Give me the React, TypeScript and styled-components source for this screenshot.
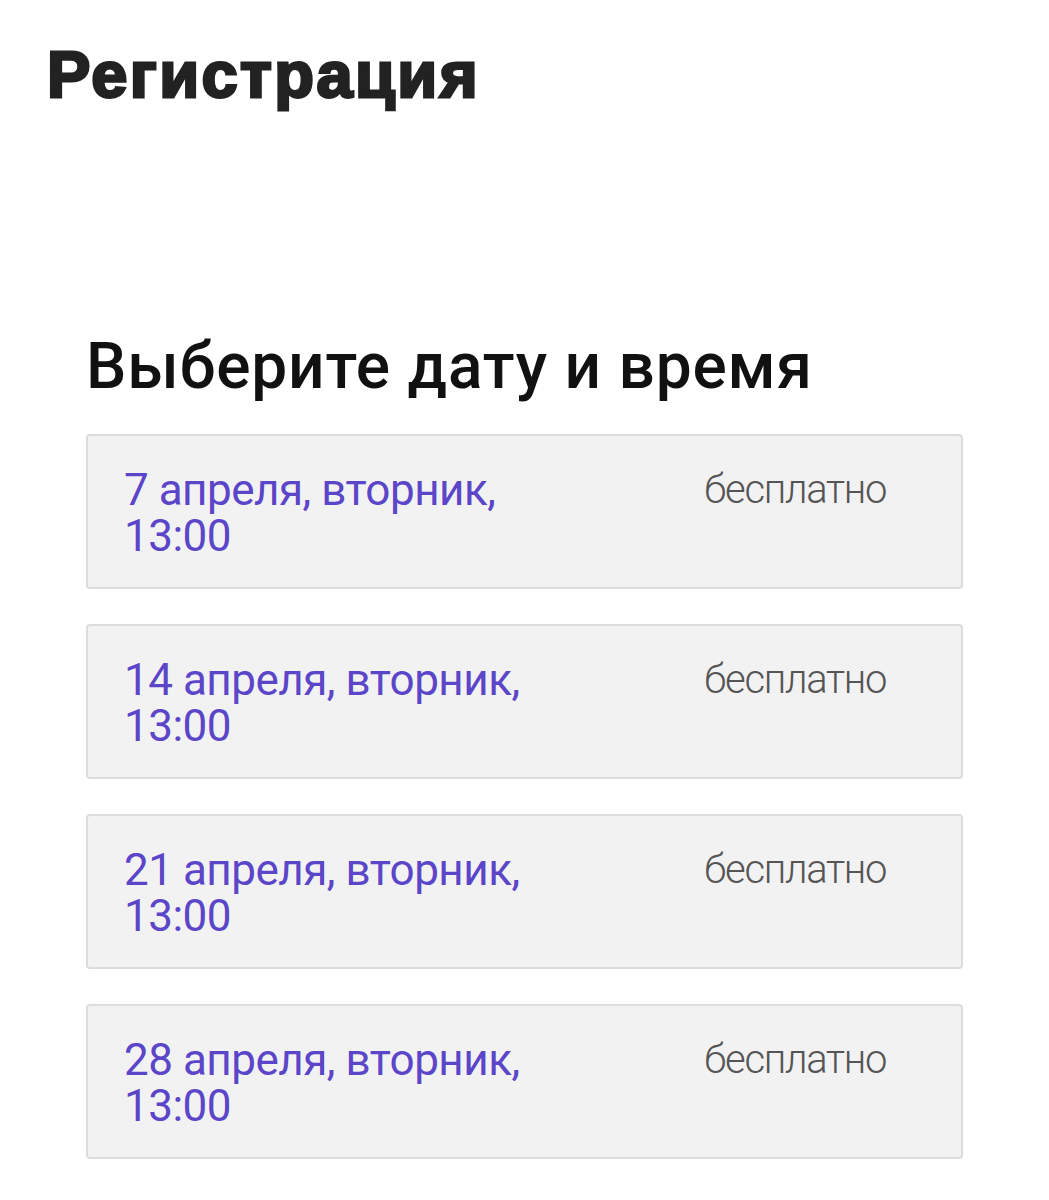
import React from "react";
import styled, { createGlobalStyle } from "styled-components";

const Global = createGlobalStyle`
  html, body { margin: 0; padding: 0; background: #ffffff; }
  body { font-family: Roboto, "Noto Sans", sans-serif; }
`;

const Page = styled.div`
  padding: 30px 86px 40px 47px;
`;

const Title = styled.h1`
  margin: 0;
  font-family: "Liberation Sans", Arial, sans-serif;
  font-weight: 700;
  font-size: 65px;
  line-height: 90px;
  letter-spacing: 2.4px;
  color: #222222;
  -webkit-text-stroke: 2.8px #222222;
`;

const Section = styled.section`
  margin-top: 212px;
  padding-left: 39px;
`;

const Subtitle = styled.h2`
  margin: 0 0 32px 0;
  font-family: Roboto, sans-serif;
  font-weight: 500;
  font-size: 64px;
  line-height: 70px;
  letter-spacing: 0.8px;
  color: #111111;
`;

const List = styled.div`
  display: flex;
  flex-direction: column;
  gap: 35px;
`;

const Card = styled.div`
  display: flex;
  justify-content: space-between;
  align-items: flex-start;
  height: 155px;
  box-sizing: border-box;
  padding: 31px 75px 0 36px;
  background: #f3f2f3;
  border: 2px solid #dddcdd;
  border-radius: 4px;
`;

const When = styled.div`
  font-family: Roboto, sans-serif;
  font-size: 44px;
  line-height: 46px;
  letter-spacing: -0.5px;
  color: #5b45c8;
  width: 440px;
`;

const Price = styled.div`
  font-family: Roboto, sans-serif;
  font-weight: 300;
  font-size: 40px;
  line-height: 46px;
  letter-spacing: -1.3px;
  color: #555555;
`;

const dates = ["7", "14", "21", "28"];

export default function App() {
  return (
    <>
      <Global />
      <Page>
        <Title>Регистрация</Title>
        <Section>
          <Subtitle>Выберите дату и время</Subtitle>
          <List>
            {dates.map((d) => (
              <Card key={d}>
                <When>
                  {d} апреля, вторник,
                  <br />
                  13:00
                </When>
                <Price>бесплатно</Price>
              </Card>
            ))}
          </List>
        </Section>
      </Page>
    </>
  );
}
